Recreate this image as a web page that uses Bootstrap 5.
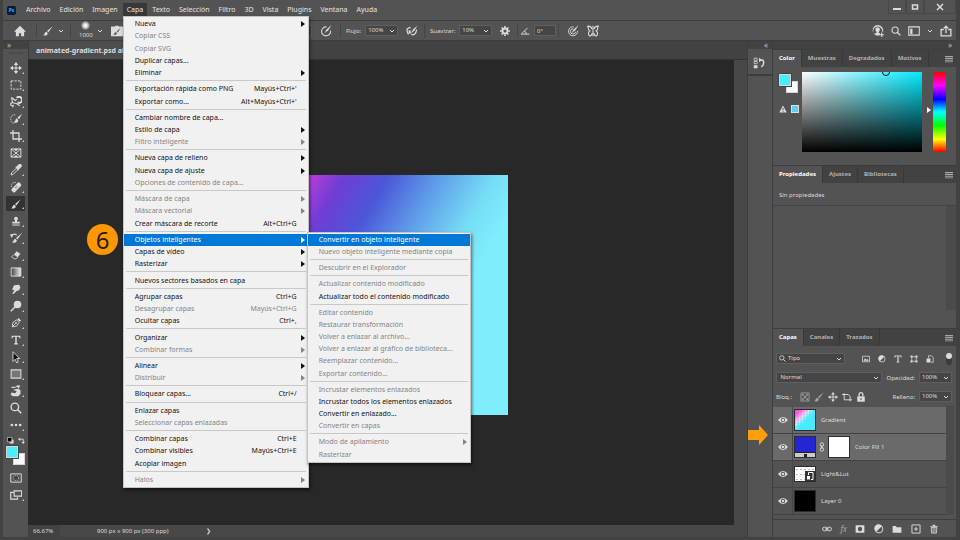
<!DOCTYPE html>
<html lang="es">
<head>
<meta charset="utf-8">
<meta name="viewport" content="width=device-width, initial-scale=1">
<title>Photoshop – Capa</title>
<link href="https://cdn.jsdelivr.net/npm/bootstrap@5.3.0/dist/css/bootstrap.min.css" rel="stylesheet">
<style>
:root{--ui:#535353;--bar:#424242;--line:#3d3d3d;--ink:#dcdcdc;--field:#454545}
body{font-family:"Noto Sans","Open Sans",sans-serif;font-size:6px;line-height:10px;background:var(--bar);color:var(--ink);overflow:hidden}
button,select,input{font:inherit;color:inherit}
.tb{background:none;border:0;padding:0;display:inline-flex;align-items:center;justify-content:center;position:relative;line-height:10px}
svg{fill:currentColor;width:12px;height:12px;flex:none;display:block}
svg.s{width:10px;height:10px}
svg.m8{width:8px;height:8px}
svg.m7{width:7px;height:7px}
svg.xs{width:6px;height:6px}
svg.defs{width:0;height:0;position:absolute}
.dim{opacity:.6}
.app{min-height:100vh;padding:0 4px 3px 3px}
.menubar{height:20px;background:var(--ui);font-size:7px}
.menubar nav{gap:1px}
.menubar .mi{color:#e4e4e4;text-decoration:none;padding:0 4px;line-height:14px;display:block}
.menubar .mi.open{background:#383838}
.pslogo{width:9px;height:9px;background:#001e36;color:#31a8ff;border-radius:2px;font-size:5px;font-weight:700;line-height:9px;text-align:center;margin:0 6px 0 4px}
.wctl .tb{width:18px;height:14px;border:1px solid #484848;border-top:0}
.wctl .tb:last-child{width:32px}
.options{height:21px;background:var(--ui);border-top:1px solid var(--line);border-bottom:1px solid var(--line)}
.og{border-right:1px solid #454545;height:15px;display:flex;align-items:center}
.og-a{width:34px}.og-b{width:34px}.og-c{width:270px}.og-d{width:84px}.og-e{width:93px}.og-f{width:41px}
.og-d,.og-e{padding-left:5px}
.acct{gap:7px}
.fld{background:var(--field);border:1px solid #5f5f5f;height:11px;padding:0 2px;line-height:9px;border-radius:1px;min-width:0}
select.fld{appearance:none;background:var(--field) url("data:image/svg+xml,%3Csvg xmlns='http://www.w3.org/2000/svg' viewBox='0 0 6 6'%3E%3Cpath d='M1 2l2 2 2-2' fill='none' stroke='%23ddd'/%3E%3C/svg%3E") no-repeat right 2px center/6px 6px}
.w33{width:33px}.w22{width:22px}
select.typesel{width:58px;height:9px;border:0}
.softdot{width:9px;height:9px;border-radius:50%;background:radial-gradient(#f4f4f4 20%,#aaa 50%,#535353 75%)}
.work{min-height:0}
.strip{height:8px;background:var(--bar);line-height:7px;color:#bbb;font-size:8px}
.tools{width:25px;background:var(--ui)}
.grip{height:10px;background:linear-gradient(#4a4a4a,#4a4a4a) center 3px/14px 2px no-repeat}
.tools .tool{width:19px;height:17px}
.tools .tool.sel{background:#333;height:15px;margin:1px 0}
.tools .more::after{content:"";position:absolute;right:1px;bottom:2px;border:1px solid;border-color:transparent #ccc #ccc transparent}
.fgbg{position:relative;width:19px;height:19px;margin-top:2px}
.fgbg i{position:absolute;border:1px solid #d8d8d8;width:12px;height:12px}
.fgbg .fg{left:0;top:0;background:#46eeff;outline:1px solid #444;z-index:1}
.fgbg .bg{right:0;bottom:0;background:#fff}
.doctabs{height:19px;background:var(--bar);border-left:1px solid var(--line);border-bottom:1px solid #333}
.doctab{background:#4d4d4d;font-weight:700;font-size:7px;padding:0 7px;line-height:19px;height:18px;width:100px;white-space:nowrap;overflow:hidden}
.stage{background:#282828;border-right:13px solid #484848;min-height:0}
.artboard{width:240px;aspect-ratio:1;margin-left:13px;margin-top:5px;background:linear-gradient(120deg,#d23edb 8%,#6f3dd6 20%,#4b57d8 32%,#5f9fea 46%,#76dcf6 60%,#7feefc 70%)}
.status{height:12px;background:#484848;line-height:12px}
.status .zoomv{width:32px;height:12px;background:var(--bar);border:0;padding:0 5px}
.status span{margin-left:37px}
.sidebtn{width:25px;background:var(--ui);border-left:1px solid var(--line)}
.sidebtn .tb{height:27px;border-bottom:2px solid var(--line);padding:3px 3px 0 0}
.dock{width:184px;border-left:1px solid var(--line)}
.ptabs{height:18px;background:var(--bar);font-weight:700;border-top:1px solid var(--line)}
.ptabs .pt{background:none;border:0;border-right:1px solid #393939;padding:0 6px;color:#b0b0b0;line-height:15px}
.ptabs .pt.active{background:var(--ui);color:#fff}
.ptabs .tb{margin-right:3px;color:#a8a8a8}
.panel{background:var(--ui)}
.colorpanel{height:98px;padding:5px 10px 13px 6px}
.swcol{width:23px}
.field2d{position:relative;width:120px;background:linear-gradient(transparent,#000),linear-gradient(90deg,#fff,#00eaff);overflow:hidden}
.field2d::after{content:"";position:absolute;left:80px;top:-4px;width:8px;height:8px;border:1px solid #111;border-radius:50%}
.hue{width:13px;background:linear-gradient(red,#f0f 17%,#00f 34%,#0ff 50%,#0f0 67%,#ff0 84%,red);position:relative}
.hue::before{content:"";position:absolute;left:-6px;top:35px;border:3px solid transparent;border-left:4px solid #fff;border-right:0}
.minisw{width:8px;height:8px;border:1px solid #ddd;background:#62cdf2}
.noprops{height:23px;border-bottom:1px solid #444;padding:0 6px;line-height:24px}
.empty{min-height:0}
.empty::after{content:"";display:block;width:10px;height:104px;background:#4b4b4b;margin-left:auto}
.layerpanel{padding-top:3px}
.lrow{height:19px;padding:0 4px 0 3px}
.kinds{gap:8px;padding-left:4px}
.knob{width:6px}
.layer{height:27px;border-bottom:1px solid #434343;gap:5px}
.layer.sel{background:#6a6a6a}
.layer .eye{width:20px;height:26px;border-right:1px solid #474747}
.layer .eye+.thumb{margin-left:-4px}
.thumb{width:22px;height:22px;border:1px solid #2c2c2c}
.t-grad{background:repeating-conic-gradient(#fff8 0 25%,transparent 0 50%) 0 0/3px 3px,linear-gradient(135deg,#f846d8,#f9c5f0 28%,#46e8ff 50%)}
.t-grad::after{content:"";display:block;height:100%;background:linear-gradient(135deg,#fa4ddd 8%,#fa4ddd00 38%,#48eaff00 39%,#48eaff 55%)}
.t-fill{background:linear-gradient(#2426d4 0 15px,#222 15px 16px,#ccc 16px)}
.t-fill::after{content:"";display:block;width:3px;height:3px;background:#222;margin:17px auto 0}
.chain{width:6px;height:10px;margin:0 -2px}
.t-lut{height:16px;background:#fff radial-gradient(#bbb 25%,transparent 30%) 0 0/4px 5px;position:relative}
.t-lut svg{position:absolute;right:0;bottom:0;background:#333;color:#fff;width:10px;height:10px}
.layers{border-right:8px solid #4b4b4b;margin-right:2px;padding-top:1px}
.pfoot{height:18px;border-top:1px solid #3f3f3f;margin-top:4px;padding:0 17px 0 49px}
.fx{font-size:8px;opacity:.6}
.psmenu{position:absolute;z-index:20;background:#f1f1f1;color:#111;border:1px solid #c4c4c4;font-size:7px;box-shadow:1px 2px 3px #0008;list-style:none;margin:0;padding:1px 0;display:flex;flex-direction:column}
.psmenu>li{flex:1 0 auto;position:relative;display:flex}
.psmenu>li.sep{flex:none;height:1px;background:#c8c8c8;margin:1px 2px 2px}
.psmenu .it{background:none;border:0;padding:0 11px;flex:1;display:flex;align-items:center;justify-content:space-between;text-align:left;line-height:12px;white-space:nowrap}
.psmenu .it:disabled{color:#848484}
.psmenu .it.hot{background:#0078d7;color:#fff}
.psmenu .it.sub{padding-right:3px}
.psmenu .sub::after{content:"";border:3px solid transparent;border-left:4px solid;border-right:0}
.menu-main{left:0;top:13px;width:186px;min-height:472px}
.menu-sub{left:183px;top:-2px;width:164px;min-height:231px}
.step{position:absolute;left:87px;top:224px;width:31px;height:31px;border-radius:50%;background:#ff9800;color:#2a1a00;font-size:24px;line-height:31px;text-align:center}
.pointer{position:absolute;left:748px;top:425px;width:20px;height:20px;color:#ff9d0a}
</style>
<script src="https://cdn.jsdelivr.net/npm/bootstrap@5.3.0/dist/js/bootstrap.bundle.min.js"></script>
</head>
<body>
<svg class="defs" aria-hidden="true">
<defs>
<symbol id="chev" viewBox="0 0 6 6"><path d="M1 2l2 2 2-2" fill="none" stroke="currentColor"/></symbol>
<symbol id="home" viewBox="0 0 16 16"><path d="M8 1L0 9h2.500v6h4v-4h3v4h4V9H16z"/></symbol>
<symbol id="brush" viewBox="0 0 16 16"><path d="M15.500.5L6.500 8l2 2.200zM5.500 9c-2 0-2.500 1.500-3 3.500L.5 15c4 .5 7.500-.5 7-4z"/></symbol>
<symbol id="brushbox" viewBox="0 0 16 16"><path fill-rule="evenodd" d="M0 2h5l1-1h4v1h6v13H0zm13 1.500L7.500 8.500 9 10zM6.500 9.500c-2 0-2 2-3.500 3.500 3 .5 5-.5 5-2.500z"/></symbol>
<symbol id="press" viewBox="0 0 16 16"><path d="M8.500 2.500a6 6 0 1 0 5.500 5" fill="none" stroke="currentColor" stroke-width="1.400"/><path d="M15.500 0L9 5.500 6 11l5-4z"/></symbol>
<symbol id="target" viewBox="0 0 16 16"><g fill="none" stroke="currentColor" stroke-width="1.200"><path d="M9 2.500a6 6 0 1 0 5 5.500M8 5a3.500 3.500 0 1 0 3.500 4"/></g><path d="M15.500 0L9 5.500 6 11l5-4z"/></symbol>
<symbol id="air" viewBox="0 0 18 16"><path d="M7 3C2 3 .5 6 2 9c1 2 0 3 2 4M8 13c3 2 7 0 8-7" fill="none" stroke="currentColor" stroke-width="1.800"/><path d="M17 0l-6 5-4 7 6-5z"/><path d="M4 7h3v5H4z"/></symbol>
<symbol id="gear" viewBox="0 0 16 16"><circle cx="8" cy="8" r="4" fill="none" stroke="currentColor" stroke-width="3"/><path d="M8 0v3M8 13v3M0 8h3M13 8h3M2.500 2.500l2 2M11.500 11.500l2 2M13.500 2.500l-2 2M2.500 13.500l2-2" stroke="currentColor" stroke-width="2.500"/></symbol>
<symbol id="angle" viewBox="0 0 16 16"><path d="M12 3L2 13h13M7 8q3 1 3 5" fill="none" stroke="currentColor" stroke-width="1.500"/></symbol>
<symbol id="fly" viewBox="0 0 16 16"><path d="M8 1v14M6.500 5.500C6 2 3 1.500 1 1.500c0 2 1 2 1 4s1 2 2 2.500c-1 1-2 1-2 3s1 3.500 2 3.500c2 0 2.500-2 2.500-3.500M9.500 5.500c.5-3.500 3.500-4 5.500-4 0 2-1 2-1 4s-1 2-2 2.500c1 1 2 1 2 3s-1 3.500-2 3.500c-2 0-2.500-2-2.500-3.500" fill="none" stroke="currentColor" stroke-width="1.400"/></symbol>
<symbol id="user" viewBox="0 0 16 16"><path fill-rule="evenodd" d="M7.500 0a7 7 0 1 0 3 13.500V11l-2-1q2-2 2-4c0-4-6-4-6 0q0 2 2 4L3 12a6 6 0 1 1 10.500-3h1.300A7.500 7.500 0 0 0 7.500 0z"/><path d="M13 10v6M10 13h6" stroke="currentColor" stroke-width="1.500"/></symbol>
<symbol id="lens" viewBox="0 0 16 16"><circle cx="6.500" cy="6.500" r="5" fill="none" stroke="currentColor" stroke-width="1.800"/><path d="M10 10l5 5" stroke="currentColor" stroke-width="2.200"/></symbol>
<symbol id="layout" viewBox="0 0 16 16"><path d="M1 2.500h14v11H1z" fill="none" stroke="currentColor" stroke-width="1.400"/><path d="M3 5h3v7H3z"/></symbol>
<symbol id="share" viewBox="0 0 16 16"><path d="M5 6H1.500v8.500h13V6H11M8 11V2M5 4.500L8 1.500l3 3" fill="none" stroke="currentColor" stroke-width="1.700"/></symbol>
<symbol id="move" viewBox="0 0 16 16"><path d="M8 2v12M2 8h12" stroke="currentColor" stroke-width="1.400"/><path d="M8 0l3 4H5zM8 16l3-4H5zM0 8l4-3v6zM16 8l-4-3v6z"/></symbol>
<symbol id="marq" viewBox="0 0 16 16"><path d="M1.500 2.500h13v11h-13z" fill="none" stroke="currentColor" stroke-width="1.300" stroke-dasharray="3 1.500"/></symbol>
<symbol id="lasso" viewBox="0 0 16 16"><path d="M2 2l5 4 2-2M2 2l1.500 7 5 1 4.500 3M3.500 9a2 2 0 1 0 1 3l-1 3" fill="none" stroke="currentColor" stroke-width="1.400"/><path d="M9 2.500a4 4 0 1 1 1 6" fill="none" stroke="currentColor" stroke-width="2.600"/></symbol>
<symbol id="qsel" viewBox="0 0 16 16"><path d="M7 2.500c-4-1-6 2-6 5s1 6 4 6" fill="none" stroke="currentColor" stroke-dasharray="2 1"/><path d="M16 1l-6 5 2 2.500zM9 7c-2 1-1 3-4 5.500 3 1.500 6 0 6-3z"/></symbol>
<symbol id="crop" viewBox="0 0 16 16"><path d="M4 0v12h12M0 4h12v12" fill="none" stroke="currentColor" stroke-width="1.700"/></symbol>
<symbol id="frame" viewBox="0 0 16 16"><path d="M1.500 2.500h13v11h-13zM1.500 2.500l13 11M14.500 2.500l-13 11" fill="none" stroke="currentColor" stroke-width="1.300"/><path d="M5 2.500h6l-3 3zM5 13.500h6l-3-3z"/></symbol>
<symbol id="drop" viewBox="0 0 16 16"><path d="M9 5l2 2-7 7-2.500.5.500-2.500z" fill="none" stroke="currentColor" stroke-width="1.300"/><path d="M7 4l2-1 3-3c2-1 4 1 4 3l-4 4-1 2z"/></symbol>
<symbol id="heal" viewBox="0 0 16 16"><rect x="1" y="5.500" width="15" height="6" rx="2" transform="rotate(-45 8.500 8.500)"/><path d="M6.500 8l2 2M8 6.500l2 2" stroke="#535353"/><path d="M2 8C1 4 4 1 8 2" fill="none" stroke="currentColor" stroke-dasharray="2 1"/></symbol>
<symbol id="stamp" viewBox="0 0 16 16"><path d="M5 4a3 3 0 0 1 6 0c0 2-1.500 3-1.500 5H14v3H2V9h4.500C6.500 7 5 6 5 4zM2 13.500h12V15H2z"/></symbol>
<symbol id="hist" viewBox="0 0 16 16"><path d="M16 1L8 8l2 2zM7 9c-2 0-2 3-4 5 4 1 6 0 6-3z"/><path d="M2 5q3-4 7-1" fill="none" stroke="currentColor" stroke-width="1.500"/><path d="M0 3l5 0-3 5z"/></symbol>
<symbol id="eraser" viewBox="0 0 16 16"><path d="M9 2l6 4-4 5-6-4z"/><path d="M5 7l6 4-2.500 3H5l-4-3z" fill="none" stroke="currentColor" stroke-width="1.300"/></symbol>
<linearGradient id="lg"><stop stop-color="#444"/><stop offset="1" stop-color="#eee"/></linearGradient>
<symbol id="grad" viewBox="0 0 16 16"><path d="M1.500 2.500h13v11h-13z" fill="url(#lg)" stroke="currentColor" stroke-width="1.200"/></symbol>
<symbol id="smudge" viewBox="0 0 16 16"><path d="M5 2l8-1 2 4-2 5-4 1-5 5-2-1 4-6-3 1-1-2z"/></symbol>
<symbol id="dodge" viewBox="0 0 16 16"><circle cx="10" cy="6" r="5"/><path d="M7 9l-6 6" stroke="currentColor" stroke-width="2"/></symbol>
<symbol id="pen" viewBox="0 0 16 16"><path d="M2 14l1-7 6-4 4 4-4 6zM2 14l5-5" fill="none" stroke="currentColor" stroke-width="1.400"/><circle cx="8" cy="8" r="1.500"/><path d="M10 2l2-2 4 4-2 2z"/></symbol>
<symbol id="type" viewBox="0 0 16 16"><path d="M1 1h14v4h-1.500q0-2.300-2.500-2.300H9.200v9.800q0 1 1.800 1V15H5v-1.500q1.800 0 1.800-1V2.700H5Q2.500 2.700 2.500 5H1z"/></symbol>
<symbol id="arrow" viewBox="0 0 16 16"><path d="M4 1l9 9H9l2 5-2 1-2-5-3 3z" fill="#111" stroke="currentColor" stroke-width="1.200"/></symbol>
<symbol id="rect" viewBox="0 0 16 16"><path d="M1.500 2.500h13v11h-13z" fill="#777" stroke="currentColor" stroke-width="1.400"/></symbol>
<symbol id="rot" viewBox="0 0 16 16"><path d="M2 3q5 1 8-1.500" fill="none" stroke="currentColor" stroke-width="1.600"/><path d="M9 0l5 1-3 4z"/><path d="M5 6l6-1 3 2v5l-3 3H4l-3-2 1-3 5 1 2-3-4-1z"/></symbol>
<symbol id="dots" viewBox="0 0 16 16"><circle cx="2.500" cy="8" r="1.800"/><circle cx="8" cy="8" r="1.800"/><circle cx="13.500" cy="8" r="1.800"/></symbol>
<symbol id="dflt" viewBox="0 0 16 16"><path d="M6 6h9v9H6z"/><path d="M1 1h10v10H1z" fill="#000" stroke="currentColor" stroke-width="1.500"/></symbol>
<symbol id="swap" viewBox="0 0 16 16"><path d="M3 5h9v8" fill="none" stroke="currentColor" stroke-width="2"/><path d="M5 1v8L0 5zM8 11h8l-4 5z"/></symbol>
<symbol id="mask" viewBox="0 0 16 16"><path d="M1 2.500h14v11H1z" fill="none" stroke="currentColor" stroke-width="1.300"/><circle cx="8" cy="8" r="3.500" fill="#444" stroke="currentColor" stroke-dasharray="1.500 1"/></symbol>
<symbol id="maskf" viewBox="0 0 16 16"><path d="M1 2h14v12H1z"/><circle cx="8" cy="8" r="3.500" fill="#535353"/></symbol>
<symbol id="screen" viewBox="0 0 16 16"><path d="M5 4.500H1v9h9V11" fill="none" stroke="currentColor" stroke-width="1.500"/><path d="M5.500 2.500h10v7h-10z" fill="#535353" stroke="currentColor" stroke-width="1.500"/></symbol>
<symbol id="histp" viewBox="0 0 16 16"><path d="M1.500 1.500h4v3h-4zM1.500 6h4v3h-4z" fill="none" stroke="currentColor"/><path d="M1 11h5v4H1zM8 1v6l4-3z"/><path d="M10 4q5-1 4 5-.5 3-3 4" fill="none" stroke="currentColor" stroke-width="2"/></symbol>
<symbol id="burger" viewBox="0 0 16 16"><path d="M0 2h16v2.500H0zM0 6h16v2H0zM0 9.500h16v2H0zM0 13h16v1.500H0z"/></symbol>
<symbol id="warn" viewBox="0 0 16 16"><path d="M8 1l7.500 14H.5z"/><path d="M8 6v4.500M8 12v1.500" stroke="#444" stroke-width="1.800"/></symbol>
<symbol id="pic" viewBox="0 0 16 16"><path d="M1 2.500h14v11H1z" fill="none" stroke="currentColor" stroke-width="1.500"/><path d="M3 11.500l3-5 2.500 3L11 8l2.500 3.500z"/></symbol>
<symbol id="adj" viewBox="0 0 16 16"><circle cx="8" cy="8" r="6.200" fill="none" stroke="currentColor" stroke-width="1.500"/><path d="M12.500 3.500A6.500 6.500 0 1 0 3.500 12.500z"/></symbol>
<symbol id="shape" viewBox="0 0 16 16"><path d="M3.500 3.500h9v9h-9z" fill="none" stroke="currentColor" stroke-width="1.500"/><path d="M1 1h4v4H1zM11 1h4v4h-4zM1 11h4v4H1zM11 11h4v4h-4z"/></symbol>
<symbol id="smart" viewBox="0 0 16 16"><path d="M5 6V1.500h6L14.500 5v9.500H10" fill="none" stroke="currentColor" stroke-width="1.500"/><path d="M1 7h8v8H1z"/></symbol>
<symbol id="checks" viewBox="0 0 16 16"><path d="M1.500 1.500h13v13h-13z" fill="none" stroke="currentColor" stroke-width="1.300"/><path d="M3 3h3v3H3zM10 3h3v3h-3zM6 6h4v4H6zM3 10h3v3H3zM10 10h3v3h-3z" opacity=".8"/></symbol>
<symbol id="artb" viewBox="0 0 16 16"><path d="M3.500 2v10.500H16M0 4h10l3 3v8" fill="none" stroke="currentColor" stroke-width="1.500"/></symbol>
<symbol id="lock" viewBox="0 0 16 16"><path d="M2 7h12v8.500H2z"/><path d="M5 7V4a3 3 0 0 1 6 0v3" fill="none" stroke="currentColor" stroke-width="2"/><path d="M8 9.500V13" stroke="#444" stroke-width="1.500"/></symbol>
<symbol id="eye" viewBox="0 0 16 16"><path fill-rule="evenodd" d="M0 8q8-10 16 0-8 10-16 0zm8-3.500a3.500 3.500 0 1 0 0 7 3.500 3.500 0 0 0 0-7z"/><circle cx="8" cy="8" r="2"/></symbol>
<symbol id="vlink" viewBox="0 0 10 16"><g fill="none" stroke="currentColor" stroke-width="1.500"><rect x="2" y="1" width="5.500" height="6" rx="2.500"/><rect x="2" y="9" width="5.500" height="6" rx="2.500"/><path d="M4.700 5v6"/></g></symbol>
<symbol id="hlink" viewBox="0 0 16 16"><g fill="none" stroke="currentColor" stroke-width="1.500"><rect x="1" y="5" width="7" height="6" rx="3"/><rect x="8" y="5" width="7" height="6" rx="3"/><path d="M5 8h6"/></g></symbol>
<symbol id="folder" viewBox="0 0 16 16"><path d="M1 3h5l1.500 2H15v9H1z"/></symbol>
<symbol id="plus" viewBox="0 0 16 16"><path d="M1.500 1.500h13v13h-13zM8 5v6M5 8h6" fill="none" stroke="currentColor" stroke-width="1.500"/></symbol>
<symbol id="trash" viewBox="0 0 16 16"><path d="M2 3h4V1h4v2h4v1.500H2z"/><path d="M3.500 5.500h9l-.7 9H4.200zM6.500 6v8M9.500 6v8" fill="none" stroke="currentColor" stroke-width="1.300"/></symbol>
<symbol id="smartb" viewBox="0 0 10 10"><path d="M2 5h3v3.500H2z"/><path d="M5 1.500h3v7H6M3.500 4V1.500H5" fill="none" stroke="currentColor"/></symbol>
</defs>
</svg>

<div class="app d-flex flex-column vh-100 position-relative">
<header class="menubar d-flex align-items-center">
  <div class="pslogo">Ps</div>
  <nav class="d-flex flex-grow-1" aria-label="Menú principal">
    <a class="mi" href="#">Archivo</a><a class="mi" href="#">Edición</a><a class="mi" href="#">Imagen</a>
    <div class="position-relative"><a class="mi open" href="#">Capa</a>
      <ul class="psmenu menu-main">
        <li><button class="it sub">Nueva</button></li>
        <li><button class="it" disabled>Copiar CSS</button></li>
        <li><button class="it" disabled>Copiar SVG</button></li>
        <li><button class="it">Duplicar capas...</button></li>
        <li><button class="it sub">Eliminar</button></li>
        <li class="sep"></li>
        <li><button class="it">Exportación rápida como PNG<span>Mayús+Ctrl+'</span></button></li>
        <li><button class="it">Exportar como...<span>Alt+Mayús+Ctrl+'</span></button></li>
        <li class="sep"></li>
        <li><button class="it">Cambiar nombre de capa...</button></li>
        <li><button class="it sub">Estilo de capa</button></li>
        <li><button class="it sub" disabled>Filtro inteligente</button></li>
        <li class="sep"></li>
        <li><button class="it sub">Nueva capa de relleno</button></li>
        <li><button class="it sub">Nueva capa de ajuste</button></li>
        <li><button class="it" disabled>Opciones de contenido de capa...</button></li>
        <li class="sep"></li>
        <li><button class="it sub" disabled>Máscara de capa</button></li>
        <li><button class="it sub" disabled>Máscara vectorial</button></li>
        <li><button class="it">Crear máscara de recorte<span>Alt+Ctrl+G</span></button></li>
        <li class="sep"></li>
        <li><button class="it sub hot">Objetos inteligentes</button>
          <ul class="psmenu menu-sub">
            <li><button class="it hot">Convertir en objeto inteligente</button></li>
            <li><button class="it" disabled>Nuevo objeto inteligente mediante copia</button></li>
            <li class="sep"></li>
            <li><button class="it" disabled>Descubrir en el Explorador</button></li>
            <li class="sep"></li>
            <li><button class="it" disabled>Actualizar contenido modificado</button></li>
            <li><button class="it">Actualizar todo el contenido modificado</button></li>
            <li class="sep"></li>
            <li><button class="it" disabled>Editar contenido</button></li>
            <li><button class="it" disabled>Restaurar transformación</button></li>
            <li><button class="it" disabled>Volver a enlazar al archivo...</button></li>
            <li><button class="it" disabled>Volver a enlazar al gráfico de biblioteca...</button></li>
            <li><button class="it" disabled>Reemplazar contenido...</button></li>
            <li><button class="it" disabled>Exportar contenido...</button></li>
            <li class="sep"></li>
            <li><button class="it" disabled>Incrustar elementos enlazados</button></li>
            <li><button class="it">Incrustar todos los elementos enlazados</button></li>
            <li><button class="it">Convertir en enlazado...</button></li>
            <li><button class="it" disabled>Convertir en capas</button></li>
            <li class="sep"></li>
            <li><button class="it sub" disabled>Modo de apilamiento</button></li>
            <li><button class="it" disabled>Rasterizar</button></li>
          </ul></li>
        <li><button class="it sub">Capas de vídeo</button></li>
        <li><button class="it sub">Rasterizar</button></li>
        <li class="sep"></li>
        <li><button class="it">Nuevos sectores basados en capa</button></li>
        <li class="sep"></li>
        <li><button class="it">Agrupar capas<span>Ctrl+G</span></button></li>
        <li><button class="it" disabled>Desagrupar capas<span>Mayús+Ctrl+G</span></button></li>
        <li><button class="it">Ocultar capas<span>Ctrl+,</span></button></li>
        <li class="sep"></li>
        <li><button class="it sub">Organizar</button></li>
        <li><button class="it sub" disabled>Combinar formas</button></li>
        <li class="sep"></li>
        <li><button class="it sub">Alinear</button></li>
        <li><button class="it sub" disabled>Distribuir</button></li>
        <li class="sep"></li>
        <li><button class="it">Bloquear capas...<span>Ctrl+/</span></button></li>
        <li class="sep"></li>
        <li><button class="it">Enlazar capas</button></li>
        <li><button class="it" disabled>Seleccionar capas enlazadas</button></li>
        <li class="sep"></li>
        <li><button class="it">Combinar capas<span>Ctrl+E</span></button></li>
        <li><button class="it">Combinar visibles<span>Mayús+Ctrl+E</span></button></li>
        <li><button class="it">Acoplar imagen</button></li>
        <li class="sep"></li>
        <li><button class="it sub" disabled>Halos</button></li>
      </ul></div>
    <a class="mi" href="#">Texto</a><a class="mi" href="#">Selección</a><a class="mi" href="#">Filtro</a><a class="mi" href="#">3D</a><a class="mi" href="#">Vista</a><a class="mi" href="#">Plugins</a><a class="mi" href="#">Ventana</a><a class="mi" href="#">Ayuda</a>
  </nav>
  <div class="wctl d-flex align-self-start">
    <button class="tb" aria-label="Minimizar"><svg class="s" viewBox="0 0 10 10"><path d="M1 6h8v2H1z"/></svg></button>
    <button class="tb" aria-label="Maximizar"><svg class="s" viewBox="0 0 10 10"><path d="M2.500 3h5v4h-5z" fill="none" stroke="currentColor" stroke-width="1.500"/></svg></button>
    <button class="tb" aria-label="Cerrar"><svg class="s" viewBox="0 0 10 10"><path d="M2 2l6 6M8 2L2 8" stroke="currentColor" stroke-width="1.500"/></svg></button>
  </div>
</header>

<div class="options d-flex align-items-center">
  <div class="og og-a justify-content-center"><button class="tb" aria-label="Inicio"><svg><use href="#home"/></svg></button></div>
  <div class="og og-b justify-content-evenly"><button class="tb" aria-label="Pincel"><svg class="s"><use href="#brush"/></svg></button><svg class="xs"><use href="#chev"/></svg></div>
  <div class="og og-c justify-content-between ps-2 pe-2">
    <div class="d-flex align-items-center gap-1">
      <div class="d-flex flex-column align-items-center"><div class="softdot"></div><span>1000</span></div>
      <svg class="xs"><use href="#chev"/></svg>
      <button class="tb ms-1" aria-label="Panel de pinceles"><svg><use href="#brushbox"/></svg></button>
    </div>
    <div class="d-flex align-items-center gap-2"><select class="fld w33" aria-label="Opacidad del pincel"></select><button class="tb" aria-label="Presión para opacidad"><svg><use href="#press"/></svg></button></div>
  </div>
  <div class="og og-d gap-1"><label for="flujo">Flujo:</label><select id="flujo" class="fld w33"><option>100%</option></select><button class="tb ms-1" aria-label="Aerógrafo"><svg><use href="#air"/></svg></button></div>
  <div class="og og-e gap-1"><label for="suav">Suavizar:</label><select id="suav" class="fld w33"><option>10%</option></select><button class="tb ms-1" aria-label="Opciones de suavizado"><svg class="s"><use href="#gear"/></svg></button></div>
  <div class="og og-f justify-content-center gap-1"><svg class="s"><use href="#angle"/></svg><input class="fld w22" aria-label="Ángulo" value="0°"></div>
  <div class="d-flex ps-2 gap-2"><button class="tb" aria-label="Presión para tamaño"><svg><use href="#target"/></svg></button><button class="tb" aria-label="Simetría"><svg><use href="#fly"/></svg></button></div>
  <div class="acct d-flex align-items-center ms-auto pe-1"><button class="tb" aria-label="Cuenta"><svg><use href="#user"/></svg></button><button class="tb" aria-label="Buscar"><svg class="s"><use href="#lens"/></svg></button><button class="tb" aria-label="Espacio de trabajo"><svg><use href="#layout"/></svg></button><svg class="xs"><use href="#chev"/></svg><button class="tb" aria-label="Compartir"><svg><use href="#share"/></svg></button></div>
</div>

<main class="work d-flex flex-grow-1">
  <aside class="tools d-flex flex-column align-items-center" aria-label="Herramientas">
    <div class="strip w-100 ps-1">»</div><div class="grip w-100"></div>
    <button class="tb tool more" aria-label="Mover"><svg><use href="#move"/></svg></button>
    <button class="tb tool more" aria-label="Marco"><svg><use href="#marq"/></svg></button>
    <button class="tb tool more" aria-label="Lazo"><svg><use href="#lasso"/></svg></button>
    <button class="tb tool more" aria-label="Selección rápida"><svg><use href="#qsel"/></svg></button>
    <button class="tb tool more" aria-label="Recortar"><svg><use href="#crop"/></svg></button>
    <button class="tb tool" aria-label="Fotograma"><svg><use href="#frame"/></svg></button>
    <button class="tb tool more" aria-label="Cuentagotas"><svg><use href="#drop"/></svg></button>
    <button class="tb tool more" aria-label="Pincel corrector"><svg><use href="#heal"/></svg></button>
    <button class="tb tool more sel" aria-label="Pincel"><svg class="s"><use href="#brush"/></svg></button>
    <button class="tb tool more" aria-label="Tampón"><svg class="s"><use href="#stamp"/></svg></button>
    <button class="tb tool more" aria-label="Pincel de historia"><svg><use href="#hist"/></svg></button>
    <button class="tb tool more" aria-label="Borrador"><svg class="s"><use href="#eraser"/></svg></button>
    <button class="tb tool more" aria-label="Degradado"><svg><use href="#grad"/></svg></button>
    <button class="tb tool more" aria-label="Dedo"><svg class="s"><use href="#smudge"/></svg></button>
    <button class="tb tool more" aria-label="Sobreexponer"><svg><use href="#dodge"/></svg></button>
    <button class="tb tool more" aria-label="Pluma"><svg class="s"><use href="#pen"/></svg></button>
    <button class="tb tool more" aria-label="Texto"><svg class="s"><use href="#type"/></svg></button>
    <button class="tb tool more" aria-label="Selección de trazado"><svg><use href="#arrow"/></svg></button>
    <button class="tb tool more" aria-label="Rectángulo"><svg><use href="#rect"/></svg></button>
    <button class="tb tool more" aria-label="Rotar vista"><svg><use href="#rot"/></svg></button>
    <button class="tb tool" aria-label="Zoom"><svg><use href="#lens"/></svg></button>
    <button class="tb tool more" aria-label="Más"><svg><use href="#dots"/></svg></button>
    <div class="d-flex gap-1 pt-1"><svg class="m7"><use href="#dflt"/></svg><svg class="m7"><use href="#swap"/></svg></div>
    <div class="fgbg"><i class="fg"></i><i class="bg"></i></div>
    <button class="tb tool mt-1" aria-label="Máscara rápida"><svg><use href="#mask"/></svg></button>
    <button class="tb tool more" aria-label="Modo de pantalla"><svg><use href="#screen"/></svg></button>
  </aside>

  <section class="d-flex flex-column flex-grow-1">
    <div class="doctabs"><div class="doctab">animated-gradient.psd al</div></div>
    <div class="stage flex-grow-1 d-flex align-items-center justify-content-center"><div class="artboard"></div></div>
    <div class="status d-flex"><input class="zoomv" aria-label="Zoom" value="66.67%"><span>900 px x 900 px (300 ppp)</span><span>❯</span></div>
  </section>

  <div class="sidebtn d-flex flex-column"><div class="strip text-end pe-1">«</div><button class="tb" aria-label="Historia"><svg><use href="#histp"/></svg></button></div>

  <aside class="dock d-flex flex-column">
    <div class="strip text-end pe-1">»</div>
    <div class="ptabs d-flex"><button class="pt active">Color</button><button class="pt">Muestras</button><button class="pt">Degradados</button><button class="pt">Motivos</button><button class="tb ms-auto" aria-label="Menú de Color"><svg class="m8"><use href="#burger"/></svg></button></div>
    <div class="panel colorpanel d-flex">
      <div class="swcol"><div class="fgbg"><i class="fg"></i><i class="bg"></i></div><div class="d-flex gap-1 pt-2 mt-1"><svg class="m8"><use href="#warn"/></svg><div class="minisw"></div></div></div>
      <div class="field2d"></div><div class="hue ms-auto"></div>
    </div>
    <div class="ptabs d-flex"><button class="pt active">Propiedades</button><button class="pt">Ajustes</button><button class="pt">Bibliotecas</button><button class="tb ms-auto" aria-label="Menú de Propiedades"><svg class="m8"><use href="#burger"/></svg></button></div>
    <div class="panel flex-grow-1 d-flex flex-column"><div class="noprops">Sin propiedades</div><div class="empty flex-grow-1"></div></div>
    <div class="ptabs d-flex"><button class="pt active">Capas</button><button class="pt">Canales</button><button class="pt">Trazados</button><button class="tb ms-auto" aria-label="Menú de Capas"><svg class="m8"><use href="#burger"/></svg></button></div>
    <div class="panel layerpanel">
      <div class="lrow d-flex align-items-center justify-content-between">
        <div class="d-flex align-items-center fld pe-0"><svg class="m7"><use href="#lens"/></svg><select class="fld typesel" aria-label="Filtro de capas"><option>Tipo</option></select></div>
        <div class="kinds d-flex"><svg class="m8"><use href="#pic"/></svg><svg class="m8"><use href="#adj"/></svg><svg class="m8"><use href="#type"/></svg><svg class="m8"><use href="#shape"/></svg><svg class="m8"><use href="#smart"/></svg></div>
        <svg viewBox="0 0 6 12" class="knob"><rect y="1" width="6" height="11" rx="3" fill="#3c3c3c"/><circle cx="3" cy="3" r="3"/></svg>
      </div>
      <div class="lrow d-flex align-items-center gap-1"><select class="fld flex-grow-1" aria-label="Modo de fusión"><option>&nbsp;Normal</option></select><label for="opac">Opacidad:</label><select id="opac" class="fld w33"><option>100%</option></select></div>
      <div class="lrow d-flex align-items-center gap-1"><span>Bloq.:</span><div class="d-flex gap-1 ps-1 me-auto"><svg class="s dim"><use href="#checks"/></svg><svg class="s dim"><use href="#brush"/></svg><svg class="s"><use href="#move"/></svg><svg class="s"><use href="#artb"/></svg><svg class="s"><use href="#lock"/></svg></div><label for="rell">Relleno:</label><select id="rell" class="fld w33"><option>100%</option></select></div>
      <div class="layers">
        <div class="layer sel d-flex align-items-center"><button class="tb eye" aria-label="Visibilidad"><svg class="s"><use href="#eye"/></svg></button><div class="thumb t-grad"></div><span>Gradient</span></div>
        <div class="layer sel d-flex align-items-center"><button class="tb eye" aria-label="Visibilidad"><svg class="s"><use href="#eye"/></svg></button><div class="thumb t-fill"></div><svg class="chain"><use href="#vlink"/></svg><div class="thumb bg-white"></div><span>Color Fill 1</span></div>
        <div class="layer d-flex align-items-center"><button class="tb eye" aria-label="Visibilidad"><svg class="s"><use href="#eye"/></svg></button><div class="thumb t-lut"><svg><use href="#smartb"/></svg></div><span>Light&amp;Lut</span></div>
        <div class="layer d-flex align-items-center"><button class="tb eye" aria-label="Visibilidad"><svg class="s"><use href="#eye"/></svg></button><div class="thumb bg-black"></div><span>Layer 0</span></div>
      </div>
      <div class="pfoot d-flex align-items-center justify-content-between"><button class="tb" aria-label="Enlazar"><svg class="s"><use href="#hlink"/></svg></button><button class="tb fx fst-italic">fx</button><button class="tb" aria-label="Máscara"><svg class="s"><use href="#maskf"/></svg></button><button class="tb" aria-label="Ajuste"><svg class="s"><use href="#adj"/></svg></button><button class="tb" aria-label="Grupo"><svg class="s"><use href="#folder"/></svg></button><button class="tb" aria-label="Nueva capa"><svg class="s"><use href="#plus"/></svg></button><button class="tb" aria-label="Eliminar"><svg class="s"><use href="#trash"/></svg></button></div>
    </div>
  </aside>
</main>
<div class="step">6</div>
<svg class="pointer" viewBox="0 0 20 20"><path d="M0 5h11V0l9 10-9 10v-5H0z"/></svg>
</div>
</body>
</html>
